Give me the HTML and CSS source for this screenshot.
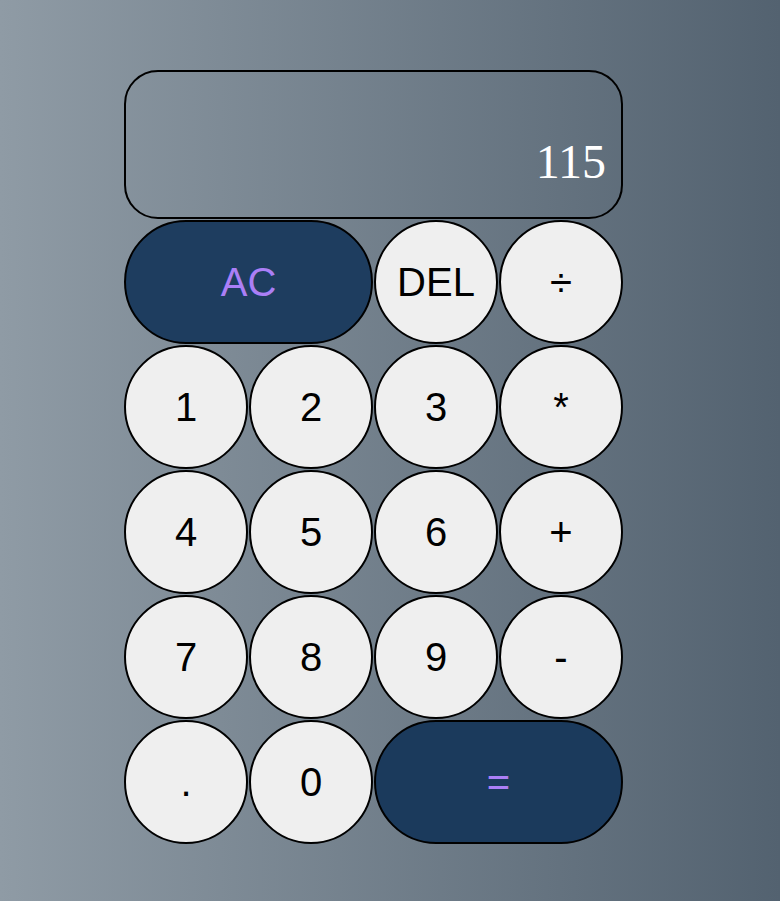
FILE: index.html
```html
<!DOCTYPE html>
<html lang="en">
<head>
<meta charset="UTF-8">
<title>Calculator</title>
<link rel="stylesheet" href="styles.css">
</head>
<body>
<div class="calculator">
  <div class="display">
    <div class="previous"></div>
    <div class="current">115</div>
  </div>
  <button class="key wide dark">AC</button>
  <button class="key">DEL</button>
  <button class="key">÷</button>
  <button class="key">1</button>
  <button class="key">2</button>
  <button class="key">3</button>
  <button class="key">*</button>
  <button class="key">4</button>
  <button class="key">5</button>
  <button class="key">6</button>
  <button class="key">+</button>
  <button class="key">7</button>
  <button class="key">8</button>
  <button class="key">9</button>
  <button class="key">-</button>
  <button class="key">.</button>
  <button class="key">0</button>
  <button class="key wide dark equals">=</button>
</div>
</body>
</html>
```
FILE: styles.css
```css
* {
  box-sizing: border-box;
}

html, body {
  margin: 0;
  padding: 0;
}

body {
  min-height: 100vh;
  background: linear-gradient(to right, #8f9ba5, #536270);
  font-family: "Liberation Sans", Arial, sans-serif;
}

.calculator {
  display: grid;
  grid-template-columns: repeat(4, 124px);
  grid-template-rows: 149px repeat(5, 124px);
  gap: 1px;
  padding: 70px 0 0 124px;
}

.display {
  grid-column: 1 / -1;
  border: 2px solid #000;
  border-radius: 34px;
  display: flex;
  flex-direction: column;
  align-items: flex-end;
  justify-content: flex-end;
  padding: 0 15px 29px 15px;
}

.current {
  color: #fff;
  font-family: "Liberation Serif", "Times New Roman", serif;
  font-size: 48px;
  line-height: 1.107;
}

.key {
  margin: 0;
  padding: 0;
  border: 2px solid #000;
  border-radius: 50%;
  background: #efefef;
  color: #000;
  font-family: "Liberation Sans", Arial, sans-serif;
  font-size: 40px;
  cursor: pointer;
}

.wide {
  grid-column: span 2;
  border-radius: 62px;
}

.dark {
  background: #1e3d5f;
  color: #ab7ff6;
}

.equals {
  background: #1b3a5c;
}
```
